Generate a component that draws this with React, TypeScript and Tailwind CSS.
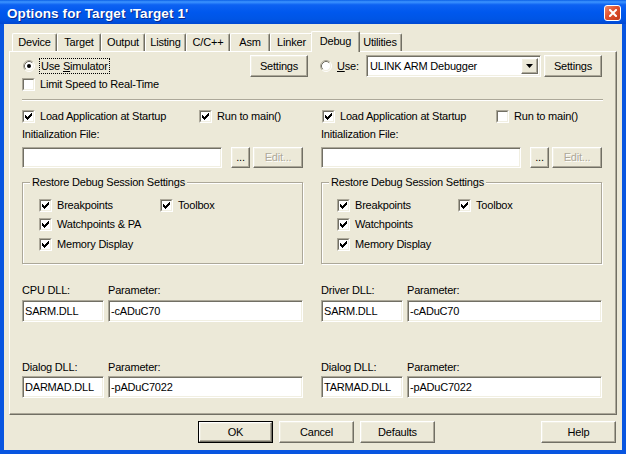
import React from 'react';

const tabs: { label: string; cls: string; sel?: boolean }[] = [
  { label: 'Device', cls: 'w-[45px]' },
  { label: 'Target', cls: 'w-[44px]' },
  { label: 'Output', cls: 'w-[44px]' },
  { label: 'Listing', cls: 'w-[41px]' },
  { label: 'C/C++', cls: 'w-[44px]' },
  { label: 'Asm', cls: 'w-[40px]' },
  { label: 'Linker', cls: 'w-[43px]' },
  { label: 'Debug', cls: 'w-[49px]', sel: true },
  { label: 'Utilities', cls: 'w-[44px]' },
];

function Check({ checked }: { checked: boolean }) {
  return (
    <span className="flex w-[13px] h-[13px] shrink-0 border border-t-[#ACA899] border-l-[#ACA899] border-r-white border-b-white">
      <span className="flex-1 flex items-center justify-center bg-white border border-t-[#716F64] border-l-[#716F64] border-r-[#F1EFE2] border-b-[#F1EFE2]">
        {checked && (
          <svg width="7" height="7" viewBox="0 0 7 7" shapeRendering="crispEdges">
            <path
              fill="#000"
              d="M0 2h1v3H0zM1 3h1v3H1zM2 4h1v3H2zM3 3h1v3H3zM4 2h1v3H4zM5 1h1v3H5zM6 0h1v3H6z"
            />
          </svg>
        )}
      </span>
    </span>
  );
}

function Radio({ checked }: { checked: boolean }) {
  return (
    <svg width="12" height="12" viewBox="0 0 12 12" className="shrink-0">
      <circle cx="6" cy="6" r="4.5" fill="#fff" />
      <path d="M2.11 9.89 A5.5 5.5 0 0 1 9.89 2.11" stroke="#ACA899" fill="none" />
      <path d="M9.89 2.11 A5.5 5.5 0 0 1 2.11 9.89" stroke="#fff" fill="none" />
      <path d="M2.82 9.18 A4.5 4.5 0 0 1 9.18 2.82" stroke="#716F64" fill="none" />
      <path d="M9.18 2.82 A4.5 4.5 0 0 1 2.82 9.18" stroke="#F1EFE2" fill="none" />
      {checked && <circle cx="6" cy="6" r="2" fill="#000" />}
    </svg>
  );
}

function Btn({
  children,
  cls,
  disabled,
}: {
  children: React.ReactNode;
  cls: string;
  disabled?: boolean;
}) {
  return (
    <div
      className={`${cls} shrink-0 flex items-center justify-center bg-[#ECE9D8] border border-t-white border-l-white border-r-[#716F64] border-b-[#716F64] shadow-[inset_-1px_-1px_0_#ACA899,inset_1px_1px_0_#F1EFE2] ${
        disabled ? 'text-[#ACA899] [text-shadow:1px_1px_0_#fff]' : ''
      }`}
    >
      {children}
    </div>
  );
}

function Field({ cls, text }: { cls: string; text?: string }) {
  return (
    <div
      className={`${cls} shrink-0 bg-white border border-t-[#ACA899] border-l-[#ACA899] border-r-white border-b-white shadow-[inset_1px_1px_0_#716F64,inset_-1px_-1px_0_#F1EFE2] flex items-center pl-[2px] whitespace-nowrap overflow-hidden`}
    >
      {text}
    </div>
  );
}

function Column({ right }: { right?: boolean }) {
  return (
    <div className="flex flex-col w-[281px]">
      <div className={`mt-[9px] h-[13px] flex items-center ${right ? 'pl-[1px]' : ''}`}>
        <div className={`flex items-center ${right ? 'w-[174px]' : 'w-[177px]'}`}>
          <Check checked />
          <span className="ml-[5px]">Load Application at Startup</span>
        </div>
        <Check checked={!right} />
        <span className="ml-[5px]">Run to main()</span>
      </div>
      <div className="mt-[5px] h-[13px] flex items-center">Initialization File:</div>
      <div className="mt-[6px] h-[21px] flex">
        <Field cls="w-[200px] h-[21px]" />
        <Btn cls="ml-[9px] w-[19px] h-[21px]">...</Btn>
        <Btn cls="ml-[3px] w-[50px] h-[21px]" disabled>
          Edit...
        </Btn>
      </div>
      <fieldset className="mt-[8px] h-[88px] border border-[#ACA899] shadow-[inset_1px_1px_0_#fff,1px_1px_0_#fff] pb-[11px]">
        <legend className="ml-[7px] px-[2px] h-[13px] leading-[13px] bg-[#ECE9D8]">
          Restore Debug Session Settings
        </legend>
        <div className={`mt-[10px] flex flex-col gap-y-[6px] ${right ? 'pl-[15px]' : 'pl-[16px]'}`}>
          <div className="flex items-center h-[13px]">
            <div className="w-[121px] flex items-center">
              <Check checked />
              <span className="ml-[5px]">Breakpoints</span>
            </div>
            <Check checked />
            <span className="ml-[5px]">Toolbox</span>
          </div>
          <div className="flex items-center h-[13px]">
            <Check checked />
            <span className="ml-[5px]">{right ? 'Watchpoints' : 'Watchpoints & PA'}</span>
          </div>
          <div className="flex items-center h-[13px] mt-[1px]">
            <Check checked />
            <span className="ml-[5px]">Memory Display</span>
          </div>
        </div>
      </fieldset>
      <div className="mt-[20px] h-[13px] grid grid-cols-[82px_195px] gap-x-[4px] items-center">
        <span>{right ? 'Driver DLL:' : 'CPU DLL:'}</span>
        <span>Parameter:</span>
      </div>
      <div className="mt-[3px] h-[22px] flex gap-x-[4px]">
        <Field cls="w-[82px] h-[22px]" text="SARM.DLL" />
        <Field cls="w-[195px] h-[22px]" text="-cADuC70" />
      </div>
      <div className="mt-[39px] h-[13px] grid grid-cols-[82px_195px] gap-x-[4px] items-center">
        <span>Dialog DLL:</span>
        <span>Parameter:</span>
      </div>
      <div className="mt-[2px] h-[22px] flex gap-x-[4px]">
        <Field cls="w-[82px] h-[22px]" text={right ? 'TARMAD.DLL' : 'DARMAD.DLL'} />
        <Field cls="w-[195px] h-[22px]" text="-pADuC7022" />
      </div>
    </div>
  );
}

export default function App() {
  return (
    <div className="w-[626px] h-[454px] flex flex-col bg-[#0855E0] overflow-hidden select-none font-['Liberation_Sans',Arial,sans-serif] text-[11px] leading-[13px] tracking-[-0.2px] text-black">
      {/* Title bar */}
      <div className="h-[24px] shrink-0 flex items-center justify-between bg-[linear-gradient(to_bottom,#0A5FE6_0%,#3D95FF_8%,#0D62F2_20%,#0058EE_50%,#0055E5_80%,#0048D2_100%)]">
        <span className="pl-[7px] pt-[2px] text-white font-bold text-[13.5px] tracking-[0.1px] [text-shadow:1px_1px_0_#0A2A8C]">
          Options for Target 'Target 1'
        </span>
        <div className="mr-[5px] mt-[2px] w-[17px] h-[16px] rounded-[3px] border border-white bg-[linear-gradient(135deg,#F08A6A_0%,#E0512E_45%,#C2391A_100%)] flex items-center justify-center">
          <svg width="8" height="8" viewBox="0 0 8 8">
            <path d="M1 1L7 7M7 1L1 7" stroke="#fff" strokeWidth="2" strokeLinecap="square" />
          </svg>
        </div>
      </div>

      {/* Body */}
      <div className="flex-1 mx-[4px] mb-[4px] bg-[#ECE9D8] flex flex-col">
        <div className="pl-[5px] pt-[7px] flex flex-col">
          {/* Tabs */}
          <div className="h-[20px] flex items-end pl-[3px]">
            {tabs.map((t) => (
              <div
                key={t.label}
                className={`${t.cls} ${
                  t.sel ? 'h-[21px] -mx-[2px] -mb-px relative z-10 pb-[2px]' : 'h-[18px]'
                } shrink-0 flex items-center justify-center bg-[#ECE9D8] border-t border-l border-r border-t-white border-l-white border-r-[#716F64] rounded-t-[2px] shadow-[inset_-1px_0_0_#ACA899] whitespace-nowrap`}
              >
                {t.label}
              </div>
            ))}
          </div>
          {/* Panel */}
          <div className="w-[608px] h-[364px] flex flex-col pl-[12px] border border-t-white border-l-white border-r-[#716F64] border-b-[#716F64] shadow-[inset_-1px_-1px_0_#ACA899]">
            <div className="grid grid-cols-[281px_281px] gap-x-[18px]">
              <div className="flex flex-col">
                <div className="mt-[3px] h-[22px] flex items-center">
                  <span className="ml-[1px]">
                    <Radio checked />
                  </span>
                  <span className="ml-[4px] h-[16px] px-[1px] flex items-center border border-dotted border-black">
                    Use <span className="underline ml-[3px]">S</span>imulator
                  </span>
                  <Btn cls="ml-auto -mr-[5px] w-[58px] h-[22px]">Settings</Btn>
                </div>
                <div className="mt-[1px] h-[13px] flex items-center">
                  <Check checked={false} />
                  <span className="ml-[5px]">Limit Speed to Real-Time</span>
                </div>
              </div>
              <div className="flex flex-col">
                <div className="mt-[3px] h-[22px] flex items-center">
                  <span className="-ml-[1px]">
                    <Radio checked={false} />
                  </span>
                  <span className="ml-[5px]">
                    <span className="underline">U</span>se:
                  </span>
                  <div className="ml-auto w-[175px] h-[22px] bg-white border border-t-[#ACA899] border-l-[#ACA899] border-r-white border-b-white shadow-[inset_1px_1px_0_#716F64,inset_-1px_-1px_0_#F1EFE2] flex items-stretch p-[2px] pr-[2px]">
                    <span className="flex-1 flex items-center pl-[1px] whitespace-nowrap">ULINK ARM Debugger</span>
                    <Btn cls="w-[17px]">
                      <svg width="7" height="4" viewBox="0 0 7 4">
                        <path d="M0 0H7L3.5 4Z" fill="#000" />
                      </svg>
                    </Btn>
                  </div>
                  <Btn cls="ml-[3px] w-[58px] h-[22px]">Settings</Btn>
                </div>
              </div>
            </div>
            <div className="mt-[8px] w-[581px] h-[2px] border-t border-t-[#ACA899] border-b border-b-white" />
            <div className="grid grid-cols-[281px_281px] gap-x-[18px]">
              <Column />
              <Column right />
            </div>
          </div>
        </div>

        {/* Bottom buttons */}
        <div className="mt-[6px] h-[22px] flex pl-[194px] pr-[6px]">
          <div className="w-[75px] h-[22px] border border-black flex">
            <Btn cls="flex-1 h-full">OK</Btn>
          </div>
          <Btn cls="ml-[6px] w-[75px] h-[22px]">Cancel</Btn>
          <Btn cls="ml-[6px] w-[75px] h-[22px]">Defaults</Btn>
          <Btn cls="ml-auto w-[75px] h-[22px]">Help</Btn>
        </div>
      </div>
    </div>
  );
}
